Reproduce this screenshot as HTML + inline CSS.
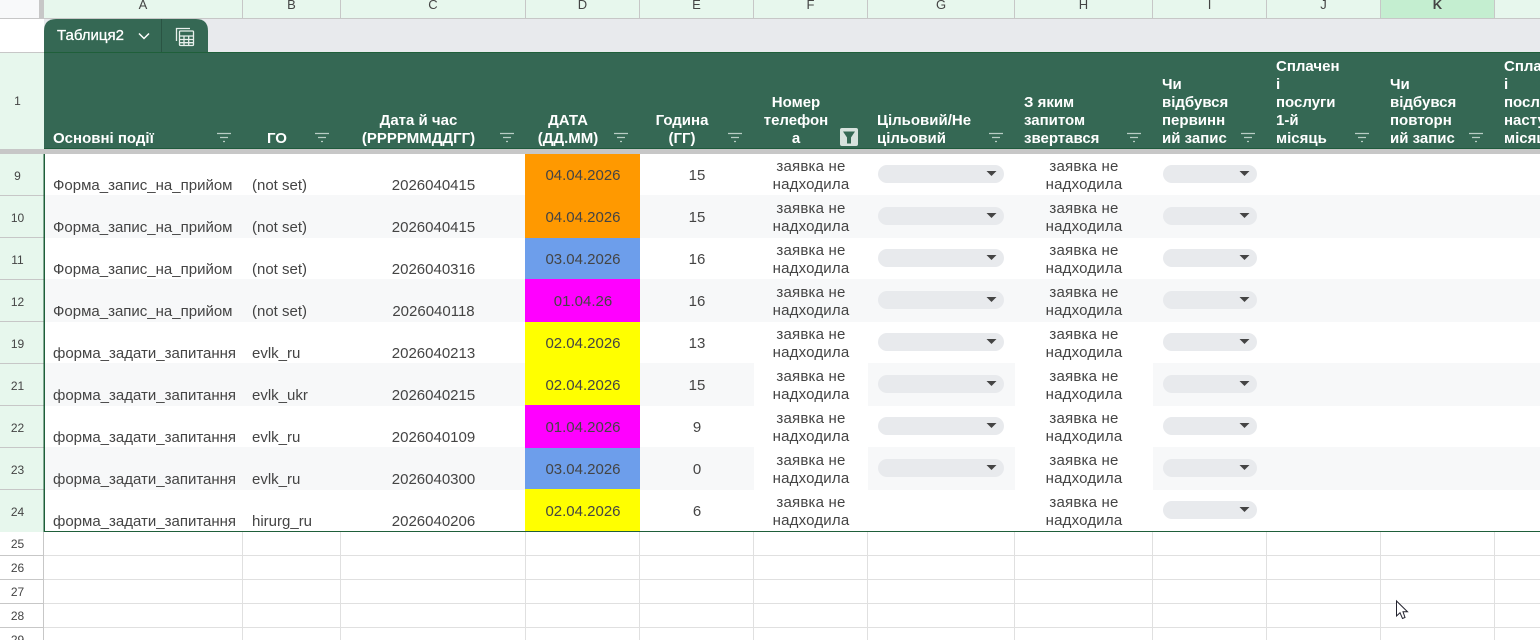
<!DOCTYPE html>
<html><head><meta charset="utf-8">
<style>
html,body{margin:0;padding:0;width:1540px;height:640px;overflow:hidden;background:#fff}
body{position:relative;font-family:"Liberation Sans",sans-serif;color:#444}
svg{position:absolute;left:0;top:0}
.r{position:absolute;left:0;width:1540px;height:42px}
.t{position:absolute;font-size:15px;line-height:18px;white-space:nowrap;color:#444}
.A{left:53px;top:24px}.B{left:252px;top:24px}
.C{left:341px;width:185px;top:24px;text-align:center;padding-left:0}
.D{left:526px;width:114px;top:14px;text-align:center}
.E{left:640px;width:114px;top:14px;text-align:center}
.F{left:754px;width:114px;top:5px;text-align:center;letter-spacing:.2px}
.H{left:1015px;width:138px;top:5px;text-align:center;letter-spacing:.2px}
.n{position:absolute;left:0;width:35px;text-align:center;font-size:12px;line-height:16px;top:15px;color:#444}
.l{position:absolute;top:-3px;font-size:13px;line-height:16px;text-align:center;color:#444}
.h{position:absolute;font-size:15px;line-height:18px;font-weight:bold;color:#fff;white-space:nowrap}
.m{position:absolute;left:0;width:35px;text-align:center;font-size:12px;line-height:16px;color:#444}
</style></head><body>
<svg width="1540" height="640" viewBox="0 0 1540 640">
<defs>
<g id="fi" stroke="#b9cdc5" stroke-width="1.2" fill="none"><path d="M0 .5H14M3 4.5H11M6 8.5H8"/></g>
<g id="ar"><path d="M0 0H10L5 5Z" fill="#444"/></g>
<g id="pg"><rect x="0" y="12" width="126" height="18" rx="9" fill="#e8eaed"/><use href="#ar" x="108.500" y="18"/></g>
<g id="pi"><rect x="0" y="12" width="94" height="18" rx="9" fill="#e8eaed"/><use href="#ar" x="76.500" y="18"/></g>
</defs>
<!-- top col header -->
<rect x="0" y="0" width="39" height="18" fill="#f8f9fa"/>
<rect x="39" y="0" width="5" height="18" fill="#c7c7c7"/>
<rect x="44" y="0" width="1496" height="18" fill="#e7f7ed"/>
<rect x="1381" y="0" width="114" height="18" fill="#c4eed0"/>
<rect x="0" y="18" width="1540" height="1" fill="#c7c7c7"/>
<path d="M242.500 0V18M340.500 0V18M525.500 0V18M639.500 0V18M753.500 0V18M867.500 0V18M1014.500 0V18M1152.500 0V18M1266.500 0V18M1380.500 0V18M1494.500 0V18" stroke="#c7c7c7"/>
<!-- tab band -->
<rect x="44" y="19" width="1496" height="33" fill="#e8eaed"/>
<rect x="0" y="52" width="44" height="1" fill="#c7c7c7"/>
<path d="M44 52V31Q44 19 56 19H196Q208 19 208 31V52Z" fill="#356854"/>
<path d="M161.500 19V52" stroke="#2a5443"/>
<path d="M139 33.500L144 38.500L149 33.500" fill="none" stroke="#fff" stroke-width="1.500"/>
<g fill="none" stroke="#e8f0ec" stroke-width="1.300">
<path d="M176.500 41V28.500H190"/>
<rect x="179.500" y="31" width="14" height="14.500" rx="1"/>
<path d="M179.500 36H193.500M179.500 39.500H193.500M179.500 42.700H193.500M184 36V45.500M188.700 36V45.500"/>
</g>
<!-- header -->
<rect x="0" y="53" width="44" height="96" fill="#e7f7ed"/>
<rect x="44" y="52" width="1496" height="97" fill="#356854"/>
<rect x="44" y="52" width="1496" height="1" fill="#1f5f3a"/>
<rect x="44" y="148" width="1496" height="1" fill="#1f5a3c"/>
<rect x="0" y="149" width="1540" height="5" fill="#c7c7c7"/>
<use href="#fi" x="217" y="133"/><use href="#fi" x="315" y="133"/><use href="#fi" x="500" y="133"/><use href="#fi" x="614" y="133"/><use href="#fi" x="728" y="133"/><use href="#fi" x="989" y="133"/><use href="#fi" x="1127" y="133"/><use href="#fi" x="1241" y="133"/><use href="#fi" x="1355" y="133"/><use href="#fi" x="1469" y="133"/>
<rect x="840" y="128" width="18" height="18" rx="2" fill="#d7e2dd"/>
<path d="M843 131.500H855L851 137.500V143.500H847V137.500Z" fill="#356854"/>
<!-- row header -->
<rect x="0" y="154" width="44" height="378" fill="#e7f7ed"/>
<path d="M0 195.500H44M0 237.500H44M0 279.500H44M0 321.500H44M0 363.500H44M0 405.500H44M0 447.500H44M0 489.500H44" stroke="#c7c7c7"/>
<!-- bands -->
<g fill="#f7f8f9">
<rect x="45" y="195" width="1495" height="43"/>
<rect x="45" y="279" width="1495" height="43"/>
<rect x="45" y="363" width="709" height="43"/><rect x="868" y="363" width="147" height="43"/><rect x="1153" y="363" width="387" height="43"/>
<rect x="45" y="447" width="709" height="43"/><rect x="868" y="447" width="147" height="43"/><rect x="1153" y="447" width="387" height="43"/>
</g>
<!-- D colors -->
<rect x="525" y="154" width="115" height="84" fill="#ff9900"/>
<rect x="525" y="238" width="115" height="41" fill="#6d9eeb"/>
<rect x="525" y="279" width="115" height="43" fill="#ff00ff"/>
<rect x="525" y="322" width="115" height="83" fill="#ffff00"/>
<rect x="525" y="405" width="115" height="43" fill="#ff00ff"/>
<rect x="525" y="448" width="115" height="41" fill="#6d9eeb"/>
<rect x="525" y="489" width="115" height="42" fill="#ffff00"/>
<!-- pills -->
<use href="#pg" x="878" y="153"/><use href="#pg" x="878" y="195"/><use href="#pg" x="878" y="237"/><use href="#pg" x="878" y="279"/><use href="#pg" x="878" y="321"/><use href="#pg" x="878" y="363"/><use href="#pg" x="878" y="405"/><use href="#pg" x="878" y="447"/>
<use href="#pi" x="1163" y="153"/><use href="#pi" x="1163" y="195"/><use href="#pi" x="1163" y="237"/><use href="#pi" x="1163" y="279"/><use href="#pi" x="1163" y="321"/><use href="#pi" x="1163" y="363"/><use href="#pi" x="1163" y="405"/><use href="#pi" x="1163" y="447"/><use href="#pi" x="1163" y="489"/>
<!-- frozen borders -->
<rect x="43.500" y="154" width="1.500" height="378" fill="#1f5f3a"/>
<!-- lower grid -->
<path d="M0 555.500H1540M0 579.500H1540M0 603.500H1540M0 627.500H1540" stroke="#e0e0e0"/>
<path d="M0 555.500H43M0 579.500H43M0 603.500H43M0 627.500H43" stroke="#c7c7c7"/>
<path d="M43.500 532V640" stroke="#c7c7c7"/>
<path d="M242.500 532V640M340.500 532V640M525.500 532V640M639.500 532V640M753.500 532V640M867.500 532V640M1014.500 532V640M1152.500 532V640M1266.500 532V640M1380.500 532V640M1494.500 532V640" stroke="#e0e0e0"/>
<rect x="44" y="531" width="1496" height="1" fill="#1f5f3a"/>
<!-- cursor -->
<path d="M1396.500 601V616L1400 612.700L1402.500 618.500L1405 617.500L1403 611.800H1407.500Z" fill="#fff" stroke="#23232f" stroke-width="1"/>
</svg>

<!-- column letters -->
<div class="l" style="left:44px;width:198px">A</div>
<div class="l" style="left:243px;width:97px">B</div>
<div class="l" style="left:341px;width:184px">C</div>
<div class="l" style="left:526px;width:113px">D</div>
<div class="l" style="left:640px;width:113px">E</div>
<div class="l" style="left:754px;width:113px">F</div>
<div class="l" style="left:868px;width:146px">G</div>
<div class="l" style="left:1015px;width:137px">H</div>
<div class="l" style="left:1153px;width:113px">I</div>
<div class="l" style="left:1267px;width:113px">J</div>
<div class="l" style="left:1381px;width:113px;font-weight:bold">K</div>

<div class="h" style="left:57px;top:19px;height:33px;line-height:33px;font-size:15px;font-weight:normal;-webkit-text-stroke:.3px #fff">Таблиця2</div>

<div class="m" style="top:93px">1</div>
<!-- header text -->
<div class="h" style="left:53px;top:130px">Основні події</div>
<div class="h" style="left:243px;width:68px;top:130px;text-align:center">ГО</div>
<div class="h" style="left:341px;width:155px;top:112px;text-align:center">Дата й час<br>(РРРРММДДГГ)</div>
<div class="h" style="left:526px;width:84px;top:112px;text-align:center">ДАТА<br>(ДД.ММ)</div>
<div class="h" style="left:640px;width:84px;top:112px;text-align:center">Година<br>(ГГ)</div>
<div class="h" style="left:754px;width:84px;top:94px;text-align:center">Номер<br>телефон<br>а</div>
<div class="h" style="left:877px;top:112px">Цільовий/Не<br>цільовий</div>
<div class="h" style="left:1024px;top:94px">З яким<br>запитом<br>звертався</div>
<div class="h" style="left:1162px;top:76px">Чи<br>відбувся<br>первинн<br>ий запис</div>
<div class="h" style="left:1276px;top:58px">Сплачен<br>і<br>послуги<br>1-й<br>місяць</div>
<div class="h" style="left:1390px;top:76px">Чи<br>відбувся<br>повторн<br>ий запис</div>
<div class="h" style="left:1504px;top:58px">Сплачені<br>і<br>послуги<br>наступний<br>місяць</div>

<div class="r" style="top:153px"><div class="n">9</div><div class="t A">Форма_запис_на_прийом</div><div class="t B">(not set)</div><div class="t C">2026040415</div><div class="t D">04.04.2026</div><div class="t E">15</div><div class="t F">заявка не<br>надходила</div><div class="t H">заявка не<br>надходила</div></div>
<div class="r" style="top:195px"><div class="n">10</div><div class="t A">Форма_запис_на_прийом</div><div class="t B">(not set)</div><div class="t C">2026040415</div><div class="t D">04.04.2026</div><div class="t E">15</div><div class="t F">заявка не<br>надходила</div><div class="t H">заявка не<br>надходила</div></div>
<div class="r" style="top:237px"><div class="n">11</div><div class="t A">Форма_запис_на_прийом</div><div class="t B">(not set)</div><div class="t C">2026040316</div><div class="t D">03.04.2026</div><div class="t E">16</div><div class="t F">заявка не<br>надходила</div><div class="t H">заявка не<br>надходила</div></div>
<div class="r" style="top:279px"><div class="n">12</div><div class="t A">Форма_запис_на_прийом</div><div class="t B">(not set)</div><div class="t C">2026040118</div><div class="t D">01.04.26</div><div class="t E">16</div><div class="t F">заявка не<br>надходила</div><div class="t H">заявка не<br>надходила</div></div>
<div class="r" style="top:321px"><div class="n">19</div><div class="t A">форма_задати_запитання</div><div class="t B">evlk_ru</div><div class="t C">2026040213</div><div class="t D">02.04.2026</div><div class="t E">13</div><div class="t F">заявка не<br>надходила</div><div class="t H">заявка не<br>надходила</div></div>
<div class="r" style="top:363px"><div class="n">21</div><div class="t A">форма_задати_запитання</div><div class="t B">evlk_ukr</div><div class="t C">2026040215</div><div class="t D">02.04.2026</div><div class="t E">15</div><div class="t F">заявка не<br>надходила</div><div class="t H">заявка не<br>надходила</div></div>
<div class="r" style="top:405px"><div class="n">22</div><div class="t A">форма_задати_запитання</div><div class="t B">evlk_ru</div><div class="t C">2026040109</div><div class="t D">01.04.2026</div><div class="t E">9</div><div class="t F">заявка не<br>надходила</div><div class="t H">заявка не<br>надходила</div></div>
<div class="r" style="top:447px"><div class="n">23</div><div class="t A">форма_задати_запитання</div><div class="t B">evlk_ru</div><div class="t C">2026040300</div><div class="t D">03.04.2026</div><div class="t E">0</div><div class="t F">заявка не<br>надходила</div><div class="t H">заявка не<br>надходила</div></div>
<div class="r" style="top:489px"><div class="n">24</div><div class="t A">форма_задати_запитання</div><div class="t B">hirurg_ru</div><div class="t C">2026040206</div><div class="t D">02.04.2026</div><div class="t E">6</div><div class="t F">заявка не<br>надходила</div><div class="t H">заявка не<br>надходила</div></div>

<div class="m" style="top:536px">25</div>
<div class="m" style="top:560px">26</div>
<div class="m" style="top:584px">27</div>
<div class="m" style="top:608px">28</div>
<div class="m" style="top:632px">29</div>
</body></html>
